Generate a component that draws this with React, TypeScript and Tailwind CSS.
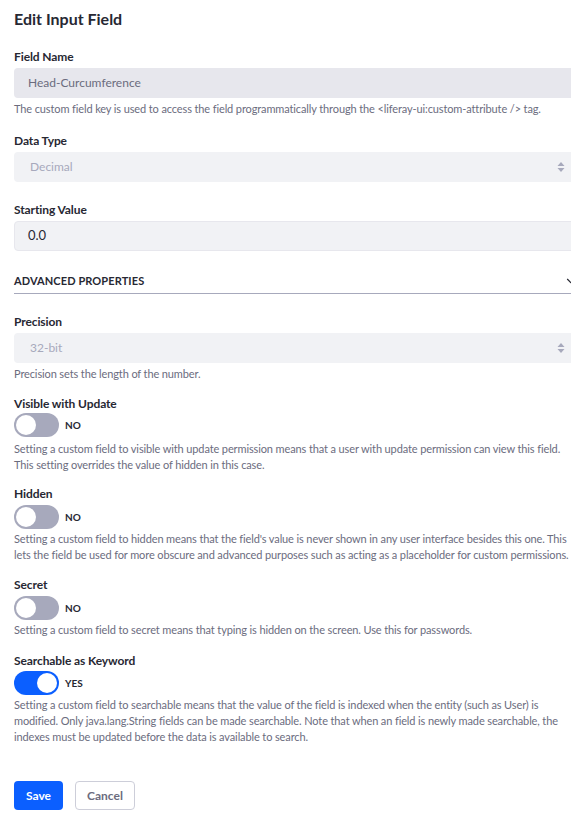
import { ChevronDown } from 'lucide-react'

const font = { fontFamily: 'Lato, "Noto Sans", sans-serif' }

function SelectArrows() {
  return (
    <svg width="8" height="12" viewBox="0 0 8 12" className="absolute right-[11px] top-1/2 -translate-y-1/2">
      <path d="M4 1 L7.5 5 H0.5 Z" fill="#a7a9bc" />
      <path d="M4 11 L7.5 7 H0.5 Z" fill="#a7a9bc" />
    </svg>
  )
}

function Label({ children, className = '' }: { children: React.ReactNode; className?: string }) {
  return <div className={`h-4 text-[12px] font-bold leading-4 tracking-[-0.1px] text-[#272833] ${className}`}>{children}</div>
}

function Help({ children, className = '' }: { children: React.ReactNode; className?: string }) {
  return <p className={`w-[555px] text-[11px] leading-4 tracking-[-0.12px] text-[#6b6c7e] ${className}`}>{children}</p>
}

function Toggle({ on, className = '' }: { on: boolean; className?: string }) {
  return (
    <div className={`flex items-center gap-[6px] ${className}`}>
      <div className={`flex h-6 w-[45px] items-center rounded-full px-[2px] ${on ? 'justify-end bg-[#0b5fff]' : 'justify-start bg-[#a7a9bc]'}`}>
        <div className="h-5 w-5 rounded-full bg-white" />
      </div>
      <span className="text-[10px] font-bold text-[#272833]">{on ? 'YES' : 'NO'}</span>
    </div>
  )
}

export default function App() {
  return (
    <div className="w-[571px] h-[828px] overflow-hidden bg-white" style={font}>
      <div className="w-[576px] pl-[14px]">
        <h1 className="pt-[8px] text-[16px] font-bold leading-[22px] text-[#272833]">Edit Input Field</h1>

        <Label className="mt-[19px]">Field Name</Label>
        <div className="mt-[3px] flex h-[30px] items-center rounded bg-[#e7e7ed] px-[14px] text-[12px] text-[#6b6c7e]">
          Head-Curcumference
        </div>
        <Help className="mt-[3px]">
          The custom field key is used to access the field programmatically through the &lt;liferay-ui:custom-attribute /&gt; tag.
        </Help>

        <Label className="mt-[16px]">Data Type</Label>
        <div className="relative mt-[3px] flex h-[30px] items-center rounded bg-[#f1f2f5] px-[16px] text-[12px] text-[#a7a9bc]">
          Decimal
          <SelectArrows />
        </div>

        <Label className="mt-[20px]">Starting Value</Label>
        <div className="mt-[3px] flex h-[30px] items-center rounded border border-[#e7e7ed] bg-[#f1f2f5] px-[13px] text-[13px] text-[#272833]">
          0.0
        </div>

        <div className="mt-[22px] flex h-4 items-center justify-between">
          <span className="text-[11px] font-bold tracking-[0.1px] text-[#272833]">ADVANCED PROPERTIES</span>
          <ChevronDown className="mr-[-2px] h-[14px] w-[14px] text-[#272833]" strokeWidth={2} />
        </div>
        <div className="mt-[4px] h-px bg-[#a7a9bc]" />

        <Label className="mt-[20px]">Precision</Label>
        <div className="relative mt-[3px] flex h-[30px] items-center rounded bg-[#f1f2f5] px-[16px] text-[12px] text-[#a7a9bc]">
          32-bit
          <SelectArrows />
        </div>
        <Help className="mt-[3px]">Precision sets the length of the number.</Help>

        <Label className="mt-[14px]">Visible with Update</Label>
        <Toggle on={false} className="mt-[1px]" />
        <Help className="mt-[4px]">
          Setting a custom field to visible with update permission means that a user with update permission can view this field. This setting overrides the value of hidden in this case.
        </Help>

        <Label className="mt-[13px]">Hidden</Label>
        <Toggle on={false} className="mt-[3px]" />
        <Help className="mt-[2px]">
          Setting a custom field to hidden means that the field's value is never shown in any user interface besides this one. This lets the field be used for more obscure and advanced purposes such as acting as a placeholder for custom permissions.
        </Help>

        <Label className="mt-[14px]">Secret</Label>
        <Toggle on={false} className="mt-[3px]" />
        <Help className="mt-[2px]">
          Setting a custom field to secret means that typing is hidden on the screen. Use this for passwords.
        </Help>

        <Label className="mt-[15px]">Searchable as Keyword</Label>
        <Toggle on className="mt-[2px]" />
        <Help className="mt-[2px]">
          Setting a custom field to searchable means that the value of the field is indexed when the entity (such as User) is modified. Only java.lang.String fields can be made searchable. Note that when an field is newly made searchable, the indexes must be updated before the data is available to search.
        </Help>

        <div className="mt-[36px] flex gap-[12px]">
          <button className="h-[29px] w-[49px] rounded bg-[#0b5fff] text-[12px] font-bold text-white">Save</button>
          <button className="h-[29px] w-[60px] rounded border border-[#cdced9] bg-white text-[12px] font-bold text-[#6b6c7e]">Cancel</button>
        </div>
      </div>
    </div>
  )
}
